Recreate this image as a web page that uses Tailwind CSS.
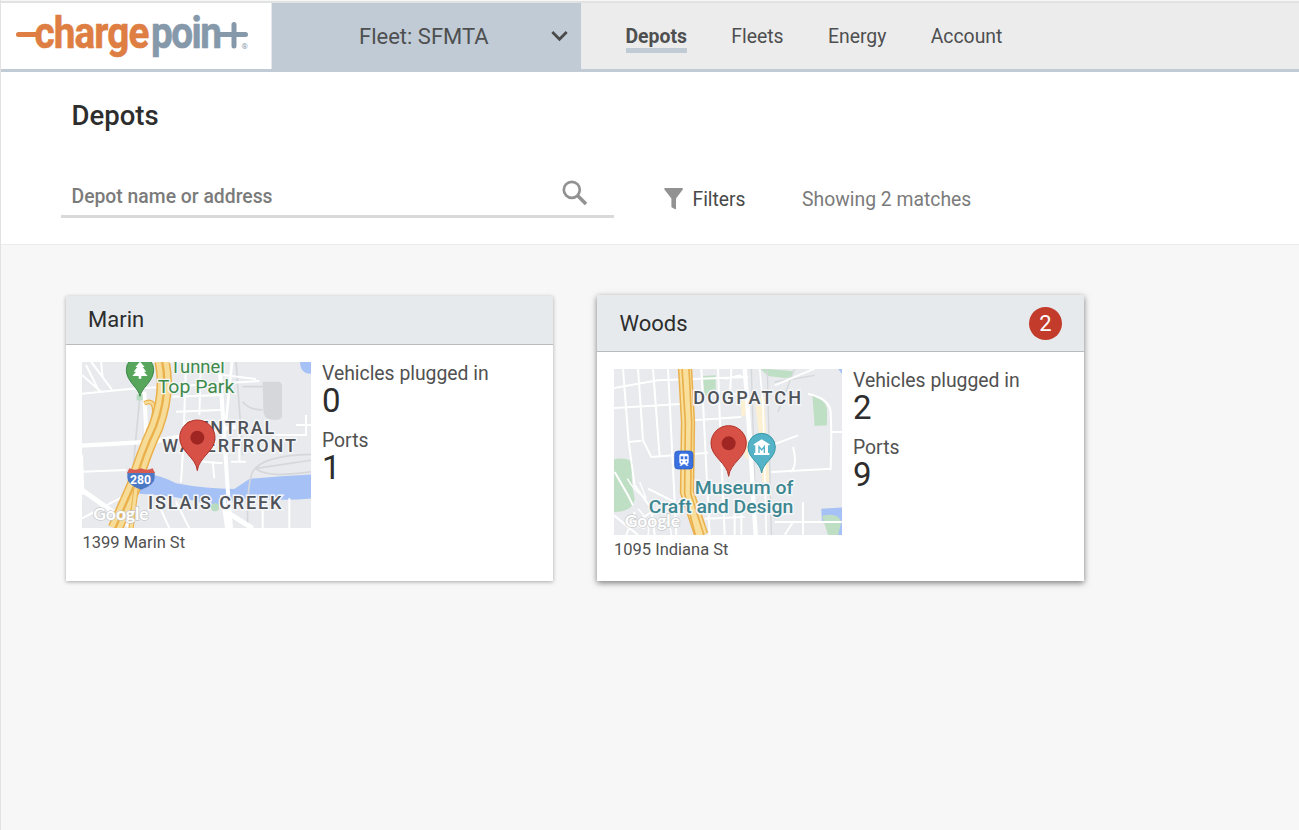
<!DOCTYPE html>
<html lang="en">
<head>
<meta charset="utf-8">
<title>Depots</title>
<script src="https://cdn.jsdelivr.net/npm/@tailwindcss/browser@4"></script>
</head>
<body class="w-[1299px] h-[830px] overflow-hidden bg-[#f7f7f7] font-['Roboto',sans-serif] border-l border-[#e2e2e2] text-[#2d2d2d]">
<header class="mt-px h-[71px] flex border-t-2 border-t-[#e1e3e3] border-b-3 border-b-[#c1cbd6] bg-[#ececec]">
  <div class="w-[271px] bg-white shrink-0 border-r border-[#e4e8ec]">
    <svg class="block" width="270" height="66" viewBox="1 3 270 66" font-family="Roboto, sans-serif" font-weight="700" font-size="45" stroke-linejoin="round">
      <path d="M18.500 34.500H38" stroke="#de7e42" stroke-width="5" stroke-linecap="round"/>
      <text x="34.500" y="48" fill="#de7e42" stroke="#de7e42" stroke-width=".6" textLength="115" lengthAdjust="spacing" transform="translate(34.500 0) scale(.86 1) translate(-34.500 0)" style="letter-spacing:0"><tspan textLength="133.500">charge</tspan></text>
      <text x="151" y="48" fill="#8599ab" stroke="#8599ab" stroke-width=".6" textLength="82.500" lengthAdjust="spacing" transform="translate(151 0) scale(.86 1) translate(-151 0)">poin</text>
      <path d="M220 34.500H245.500M234 24.500V46" stroke="#8599ab" stroke-width="5" stroke-linecap="round"/>
      <text x="241.500" y="49" font-size="8" font-weight="400" fill="#8599ab">®</text>
    </svg>
  </div>
  <button class="w-[309px] shrink-0 bg-[#c1cbd6] flex items-center pl-[87px] text-[22px] text-[#4e4f50]">
    <span class="w-[191.500px] text-left">Fleet: SFMTA</span>
    <svg width="17" height="12" viewBox="0 0 17 12" fill="none" stroke="#4a4a4a" stroke-width="2.800"><path d="M1.300 2L8.500 9.200L15.700 2"/></svg>
  </button>
  <nav class="flex pl-[44.500px] gap-[44.300px] text-[19.400px] leading-[22px] text-[#4e4f50] pt-[23px]">
    <a class="font-bold h-[27px] border-b-5 border-[#c1cbd6]">Depots</a><a>Fleets</a><a>Energy</a><a>Account</a>
  </nav>
</header>
<section class="h-[173px] bg-white border-b border-[#ebebeb]">
  <h1 class="pl-[70.500px] pt-[27px] text-[27.500px] leading-[34px] font-medium">Depots</h1>
  <div class="flex pl-[60px] pt-[40px] h-[85px]">
    <div class="w-[553px] h-[45px] border-b-3 border-[#d9d9d9] flex justify-between pl-[10.500px] pr-[26px]">
      <span class="pt-[13px] text-[19.350px] leading-[22px] font-medium text-[#7b7b7b]">Depot name or address</span>
      <svg class="mt-[7px]" width="26" height="26" viewBox="0 0 26 26" fill="none" stroke="#929292"><circle cx="9.800" cy="9.800" r="8" stroke-width="2.700"/><path d="M15.500 15.500L24 24" stroke-width="3.600"/></svg>
    </div>
    <button class="flex items-start pl-[50px] pt-[16px] text-[19.300px] leading-[22px] text-[#484848]">
      <svg class="-mt-px" width="20" height="22" viewBox="0 0 20 22" fill="#929292"><path d="M1.200 0H18a1 1 0 0 1 .8 1.600L12 10.500V20.200a1 1 0 0 1-1.300.9L8 19.500a1.200 1.200 0 0 1-.6-1V10.500L.4 1.600A1 1 0 0 1 1.200 0z"/></svg>
      <span class="ml-[8.500px]">Filters</span>
    </button>
    <span class="pl-[56.500px] pt-[16px] text-[19.350px] leading-[22px] text-[#7b7b7b]">Showing 2 matches</span>
  </div>
</section>
<main class="flex pl-[65px] pt-[50px] gap-[44px]">
  <article class="w-[487px] h-[285px] mt-px bg-white shadow-[0_1px_4px_rgba(0,0,0,.32)]">
    <h2 class="h-[49px] bg-[#e6eaed] border-b border-[#b9bcbe] pl-[22px] text-[22px] leading-[48px]">Marin</h2>
    <div class="flex pl-4 pt-[17px]">
      <div class="w-[229px]">
        <svg class="block" width="229" height="166" viewBox="18 21 687 498" font-family="Roboto, sans-serif" font-weight="500">
          <rect x="18" y="21" width="687" height="498" fill="#e8eaed"/>
          <path d="M560 80h46q12 0 12 14v86q0 14-14 14h-18q-24-4-24-30z" fill="#d5d7da"/>
          <path d="M672 18H710V56Q672 60 672 18zM190 350Q260 362 300 385Q390 402 475 402L520 372Q610 362 710 358V430Q620 440 520 428L420 452Q300 420 190 416z" fill="#a5c1f5"/>
          <g fill="none" stroke="#d5d7da" stroke-width="5"><path d="M192 120L172 330M480 20L500 300M710 298Q560 300 530 350Q512 390 515 520M710 315L540 340Q570 370 710 350M500 95H570M500 140Q520 165 560 165"/></g>
          <g fill="none" stroke="#fff" stroke-width="6"><path d="M18 116L160 102L550 78M45 20L108 104M75 18L80 68M18 60L75 110M30 30L70 110M330 20L322 270L315 382M375 20L370 180M300 170L435 165M290 125L440 120M18 350L150 345M18 490L160 415M18 300L22 420M410 320L415 370M380 320L440 325M465 320H510M490 240V320M690 180V240H590M660 210H705M240 430L280 520M300 440L340 520M560 430V520M640 430V520M440 60L540 72"/></g>
          <g fill="none" stroke="#fff"><path d="M18 272L230 260L480 215" stroke-width="13"/><path d="M205 110L212 260M430 20L455 400L465 520" stroke-width="12"/><path d="M468 20L450 200" stroke-width="8"/><path d="M18 405L110 470L170 520M450 470L530 520M440 420L455 520" stroke-width="15"/></g>
          <g fill="none"><path d="M205 145Q235 130 235 170Q232 200 215 230" stroke="#eab04c" stroke-width="14"/><path d="M205 145Q235 130 235 170Q232 200 215 230" stroke="#f6dc96" stroke-width="7"/><path d="M258 18Q278 110 240 215Q200 300 175 390L118 520" stroke="#eab04c" stroke-width="46"/><path d="M258 18Q278 110 240 215Q200 300 175 390L118 520" stroke="#f6dc96" stroke-width="37"/><path d="M258 18Q278 110 240 215Q200 300 175 390L118 520" stroke="#eab04c" stroke-width="7"/><path d="M180 400L165 520" stroke="#eab04c" stroke-width="16"/><path d="M180 400L165 520" stroke="#f6dc96" stroke-width="10"/></g>
          <rect x="182" y="118" width="18" height="18" fill="#b9dcc0"/>
          <path d="M192 124C188 98 151 80 151 44A41 41 0 0 1 233 44C233 80 196 98 192 124z" fill="#57a65c" stroke="#3b8849" stroke-width="3"/>
          <path d="M192 20L206 36H200L211 50H204L215 63H196V71H188V63H169L180 50H173L184 36H178z" fill="#fff"/>
          <g fill="#3e8a4b" stroke="#f4f6f5" stroke-width="8" paint-order="stroke" font-size="57" font-weight="400"><text x="282" y="55" textLength="164" lengthAdjust="spacingAndGlyphs">Tunnel</text><text x="245" y="113" textLength="230" lengthAdjust="spacingAndGlyphs">Top Park</text></g>
          <g fill="#4f5359" stroke="#f5f6f7" stroke-width="9" paint-order="stroke" font-size="54"><text x="326" y="237" textLength="269">CENTRAL</text><text x="259" y="291" textLength="401">WATERFRONT</text><text x="216" y="463" textLength="400">ISLAIS CREEK</text></g>
          <circle cx="417" cy="457" r="12" fill="#b9dcc0"/>
          <path d="M154 352H236V368Q236 390 195 404Q154 390 154 368z" fill="#4b78c5"/><path d="M153 354L160 340Q177 348 195 340Q213 348 230 340L237 354z" fill="#d65a50"/>
          <text x="162" y="388" font-size="36" font-weight="700" fill="#fff" textLength="63" lengthAdjust="spacingAndGlyphs">280</text>
          <text x="52" y="495" font-size="53" font-weight="700" fill="#fff" stroke="#c6c8ca" stroke-width="4" paint-order="stroke" font-family="Lato, sans-serif" textLength="166" lengthAdjust="spacingAndGlyphs">Google</text>
          <path d="M364 347C360 306 311 290 311 248A53 53 0 0 1 417 248C417 290 368 306 364 347z" fill="#d75146" stroke="#b13127" stroke-width="3"/><circle cx="364" cy="248" r="21" fill="#9f2623"/>
        </svg>
        <p class="mt-[5px] pl-[.5px] text-[16.500px] leading-[20px] text-[#515151]">1399 Marin St</p>
      </div>
      <dl class="pl-[11px] pt-px text-[19.350px] leading-[22px] text-[#515151]">
        <dt>Vehicles plugged in</dt><dd class="text-[33px] leading-[32px] h-[45px] text-[#2d2d2d]">0</dd>
        <dt>Ports</dt><dd class="text-[33px] leading-[32px] text-[#2d2d2d]">1</dd>
      </dl>
    </div>
  </article>
  <article class="w-[487px] h-[286px] bg-white shadow-[0_2px_6px_rgba(0,0,0,.5)]">
    <div class="h-[57px] bg-[#e6eaed] border-b border-[#b9bcbe] pl-[22.500px] pr-[22px] flex items-center justify-between text-[22px]"><h2>Woods</h2><span class="size-[33px] rounded-full bg-[#c23b2b] text-white text-center leading-[33px]">2</span></div>
    <div class="flex pl-[17px] pt-[17px]">
      <div class="w-[228.500px]">
        <svg class="block" width="228" height="166" viewBox="18 21 684 498" font-family="Roboto, sans-serif" font-weight="500">
          <rect x="18" y="21" width="687" height="498" fill="#e8eaed"/>
          <g fill="#bfdfc5"><path d="M18 292Q50 285 75 300Q65 350 80 410Q75 450 18 450zM285 42L323 40V85L290 105zM455 18L555 28Q555 50 530 48L480 42zM613 100Q650 110 657 140V190L620 192z"/></g>
          <path d="M398 110L420 120L410 165L400 160zM440 105H468L485 360H462L455 240zM405 235H420V295L410 285z" fill="#fcf0d2"/>
          <path d="M690 20H705V40zM640 440L705 436V519H690Q665 480 642 482z" fill="#a5c1f5"/><path d="M642 462Q690 450 700 480L690 519H660z" fill="#bfdfc5"/>
          <g fill="none" stroke="#d5d7da" stroke-width="4"><path d="M430 20L445 519M478 20L490 519M500 60L620 40M560 20L510 150"/></g>
          <g fill="none" stroke="#fff" stroke-width="6"><path d="M18 78L150 55L420 45M18 138L220 126M45 20L62 240L80 370L130 440L140 519M90 20L105 235L130 285L300 272M135 20L155 285M180 20L205 519M280 20L305 519M330 20L338 240L350 519M370 20L365 120M400 40L350 50M62 240L100 236M255 175L400 165M340 90L410 100M490 330L670 320M600 95Q665 110 668 150L670 210H705M670 210L668 325M570 220L490 250M555 255Q570 310 548 330M500 480H705M555 480L530 519M585 420V519M20 330L60 400L75 430M80 450L55 519M130 450L70 490M120 380L200 420M290 470L410 465M400 440V519M380 440V519M500 70L620 20M18 460L90 519"/></g>
          <path d="M410 18L424 210L443 519" fill="none" stroke="#fff" stroke-width="13"/><path d="M455 18L465 130L475 519" fill="none" stroke="#fff" stroke-width="5"/>
          <g fill="none"><path d="M231 18L240 180L237 390L280 519" stroke="#eab04c" stroke-width="43"/><path d="M231 18L240 180L237 390L280 519" stroke="#f8df9c" stroke-width="34"/><path d="M222 18L232 180L230 395L262 519M243 18L251 180L248 395L288 519" stroke="#eab04c" stroke-width="5"/></g>
          <g fill="none" stroke="#fff" stroke-width="4"><path d="M58 350Q80 390 110 405M95 360L115 410M50 480L110 500M90 440Q130 480 120 519M150 470Q190 480 190 519"/></g>
          <rect x="200" y="267" width="55" height="54" rx="10" fill="#3a71e0" stroke="#2757c0" stroke-width="2"/>
          <path d="M220 275H236Q242 275 242 281V301Q242 306 237 306L242 311H235L231 307H225L221 311H214L219 306Q214 306 214 301V281Q214 275 220 275z" fill="#fff"/><path d="M218 283H226V292H218zM230 283H238V292H230z" fill="#3a71e0"/><circle cx="221" cy="299" r="2.500" fill="#3a71e0"/><circle cx="235" cy="299" r="2.500" fill="#3a71e0"/>
          <path d="M461 333C457 300 420 290 420 255A41 41 0 0 1 502 255C502 290 465 300 461 333z" fill="#55b3c8" stroke="#3799a8" stroke-width="3"/>
          <path d="M461 232L485 247V250H480V273H484V279H438V273H442V250H437V247z" fill="#fff"/><path d="M453 273V254L461 264L469 254V273" fill="none" stroke="#55b3c8" stroke-width="4"/>
          <text x="256" y="125" font-size="54" fill="#4f5359" stroke="#f5f6f7" stroke-width="9" paint-order="stroke" textLength="323">DOGPATCH</text>
          <g fill="#3c8791" stroke="#f4f6f7" stroke-width="9" paint-order="stroke" font-size="57"><text x="260" y="395" textLength="296" lengthAdjust="spacingAndGlyphs">Museum of</text><text x="122" y="452" textLength="434" lengthAdjust="spacingAndGlyphs">Craft and Design</text></g>
          <text x="50" y="495" font-size="53" font-weight="700" fill="#fff" stroke="#c6c8ca" stroke-width="4" paint-order="stroke" font-family="Lato, sans-serif" textLength="166" lengthAdjust="spacingAndGlyphs">Google</text>
          <path d="M362 343C358 302 309 286 309 244A53 53 0 0 1 415 244C415 286 366 302 362 343z" fill="#d75146" stroke="#b13127" stroke-width="3"/><circle cx="362" cy="244" r="21" fill="#9f2623"/>
        </svg>
        <p class="mt-[5px] text-[16.500px] leading-[20px] text-[#515151]">1095 Indiana St</p>
      </div>
      <dl class="pl-[10.500px] pt-px text-[19.350px] leading-[22px] text-[#515151]">
        <dt>Vehicles plugged in</dt><dd class="text-[33px] leading-[32px] h-[45px] text-[#2d2d2d]">2</dd>
        <dt>Ports</dt><dd class="text-[33px] leading-[32px] text-[#2d2d2d]">9</dd>
      </dl>
    </div>
  </article>
</main>
</body>
</html>
